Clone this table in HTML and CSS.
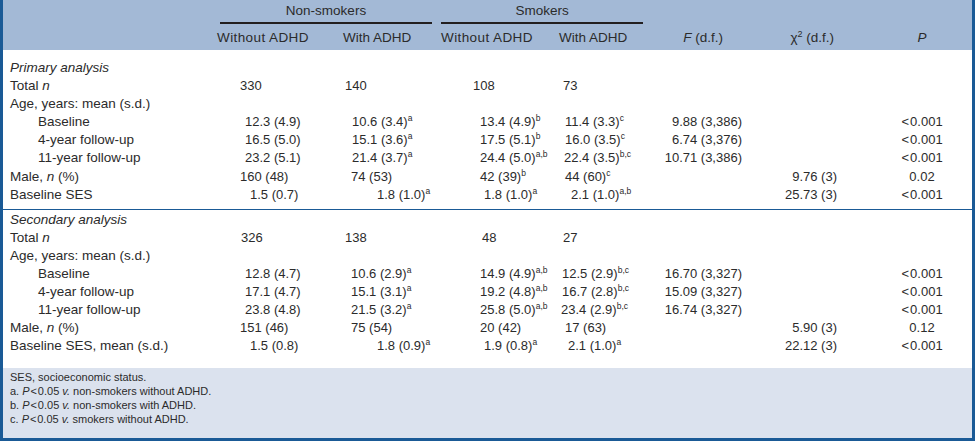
FILE: index.html
```html
<!DOCTYPE html>
<html>
<head>
<meta charset="utf-8">
<link rel="stylesheet" href="styles.css">
</head>
<body>
<div class="frame">
  <table class="t">
    <colgroup>
      <col class="w0"><col class="w1"><col class="w2"><col class="w3"><col class="w4"><col class="wf"><col class="wx"><col class="wp">
    </colgroup>
    <thead class="head">
      <tr class="hr1">
        <th></th>
        <th colspan="2" class="grp grp-non"><span class="grp-line">Non-smokers</span></th>
        <th colspan="2" class="grp grp-smk"><span class="grp-line">Smokers</span></th>
        <th></th><th></th><th></th>
      </tr>
      <tr class="hr2">
        <th></th>
        <th class="h1">Without ADHD</th>
        <th class="h2">With ADHD</th>
        <th class="h3">Without ADHD</th>
        <th class="h4">With ADHD</th>
        <th class="hf"><i>F</i> (d.f.)</th>
        <th class="hx">χ<sup class="sq">2</sup> (d.f.)</th>
        <th class="hp"><i>P</i></th>
      </tr>
    </thead>
    <tbody class="sec sec1">
      <tr><td class="lab"><i>Primary analysis</i></td><td></td><td></td><td></td><td></td><td></td><td></td><td></td></tr>
      <tr><td class="lab">Total <i>n</i></td><td class="p28">330</td><td class="p10">140</td><td class="p37">108</td><td class="p10">73</td><td></td><td></td><td></td></tr>
      <tr><td class="lab">Age, years: mean (s.d.)</td><td></td><td></td><td></td><td></td><td></td><td></td><td></td></tr>
      <tr><td class="sub">Baseline</td><td class="p33">12.3 (4.9)</td><td class="p17">10.6 (3.4)<sup>a</sup></td><td class="p44">13.4 (4.9)<sup>b</sup></td><td class="p12">11.4 (3.3)<sup>c</sup></td><td class="f">9.88 (3,386)</td><td class="x"></td><td class="pv">&lt;&#8202;0.001</td></tr>
      <tr><td class="sub">4-year follow-up</td><td class="p33">16.5 (5.0)</td><td class="p17">15.1 (3.6)<sup>a</sup></td><td class="p44">17.5 (5.1)<sup>b</sup></td><td class="p12">16.0 (3.5)<sup>c</sup></td><td class="f">6.74 (3,376)</td><td class="x"></td><td class="pv">&lt;&#8202;0.001</td></tr>
      <tr><td class="sub">11-year follow-up</td><td class="p33">23.2 (5.1)</td><td class="p17">21.4 (3.7)<sup>a</sup></td><td class="p44">24.4 (5.0)<sup>a,b</sup></td><td class="p11">22.4 (3.5)<sup>b,c</sup></td><td class="f">10.71 (3,386)</td><td class="x"></td><td class="pv">&lt;&#8202;0.001</td></tr>
      <tr><td class="lab">Male, <i>n</i> (%)</td><td class="p28">160 (48)</td><td class="p16">74 (53)</td><td class="p44">42 (39)<sup>b</sup></td><td class="p12">44 (60)<sup>c</sup></td><td class="f"></td><td class="x">9.76 (3)</td><td class="pv">0.02</td></tr>
      <tr><td class="lab">Baseline SES</td><td class="p38">1.5 (0.7)</td><td class="p42">1.8 (1.0)<sup>a</sup></td><td class="p48">1.8 (1.0)<sup>a</sup></td><td class="p18">2.1 (1.0)<sup>a,b</sup></td><td class="f"></td><td class="x">25.73 (3)</td><td class="pv">&lt;&#8202;0.001</td></tr>
    </tbody>
    <tbody class="sec sec2">
      <tr><td class="lab"><i>Secondary analysis</i></td><td></td><td></td><td></td><td></td><td></td><td></td><td></td></tr>
      <tr><td class="lab">Total <i>n</i></td><td class="p29">326</td><td class="p10">138</td><td class="p46">48</td><td class="p10">27</td><td></td><td></td><td></td></tr>
      <tr><td class="lab">Age, years: mean (s.d.)</td><td></td><td></td><td></td><td></td><td></td><td></td><td></td></tr>
      <tr><td class="sub">Baseline</td><td class="p33">12.8 (4.7)</td><td class="p16">10.6 (2.9)<sup>a</sup></td><td class="p44">14.9 (4.9)<sup>a,b</sup></td><td class="p9">12.5 (2.9)<sup>b,c</sup></td><td class="f">16.70 (3,327)</td><td class="x"></td><td class="pv">&lt;&#8202;0.001</td></tr>
      <tr><td class="sub">4-year follow-up</td><td class="p33">17.1 (4.7)</td><td class="p16">15.1 (3.1)<sup>a</sup></td><td class="p44">19.2 (4.8)<sup>a,b</sup></td><td class="p9">16.7 (2.8)<sup>b,c</sup></td><td class="f">15.09 (3,327)</td><td class="x"></td><td class="pv">&lt;&#8202;0.001</td></tr>
      <tr><td class="sub">11-year follow-up</td><td class="p33">23.8 (4.8)</td><td class="p16">21.5 (3.2)<sup>a</sup></td><td class="p44">25.8 (5.0)<sup>a,b</sup></td><td class="p8">23.4 (2.9)<sup>b,c</sup></td><td class="f">16.74 (3,327)</td><td class="x"></td><td class="pv">&lt;&#8202;0.001</td></tr>
      <tr><td class="lab">Male, <i>n</i> (%)</td><td class="p28">151 (46)</td><td class="p16">75 (54)</td><td class="p44">20 (42)</td><td class="p12">17 (63)</td><td class="f"></td><td class="x">5.90 (3)</td><td class="pv">0.12</td></tr>
      <tr><td class="lab">Baseline SES, mean (s.d.)</td><td class="p38">1.5 (0.8)</td><td class="p42">1.8 (0.9)<sup>a</sup></td><td class="p48">1.9 (0.8)<sup>a</sup></td><td class="p15">2.1 (1.0)<sup>a</sup></td><td class="f"></td><td class="x">22.12 (3)</td><td class="pv">&lt;&#8202;0.001</td></tr>
    </tbody>
  </table>
  <div class="notes">
    <div>SES, socioeconomic status.</div>
    <div>a. <i>P</i>&#8202;&lt;&#8202;0.05 <i>v.</i> non-smokers without ADHD.</div>
    <div>b. <i>P</i>&#8202;&lt;&#8202;0.05 <i>v.</i> non-smokers with ADHD.</div>
    <div>c. <i>P</i>&#8202;&lt;&#8202;0.05 <i>v.</i> smokers without ADHD.</div>
  </div>
</div>
</body>
</html>
```
FILE: styles.css
```css
html, body { margin: 0; padding: 0; background: #ffffff; }
body {
  font-family: "Liberation Sans", Arial, sans-serif;
  font-size: 13.5px;
  color: #2b2b2b;
}
.frame {
  width: 975px;
  height: 441px;
  box-sizing: border-box;
  border-left: 3px solid #1a5a96;
  border-right: 3px solid #1a5a96;
  border-bottom: 3px solid #1a5a96;
  display: flex;
  flex-direction: column;
  background: #ffffff;
}
.t {
  width: 969px;
  border-collapse: collapse;
  table-layout: fixed;
  border-spacing: 0;
}
.w0 { width: 209px; }
.w1 { width: 123px; }
.w2 { width: 101px; }
.w3 { width: 117px; }
.w4 { width: 97px; }
.wf { width: 100px; }
.wx { width: 110px; }
.wp { width: 112px; }

.t th, .t td {
  padding: 0;
  font-weight: normal;
  white-space: nowrap;
  text-align: left;
  line-height: 18.1px;
  vertical-align: top;
}
.t td { font-size: 13px; }
.t td.lab, .t td.sub { font-size: 13.5px; }
.head { background: #a3b9d6; }
.hr1 th { padding-top: 2px; line-height: 18px; }
.grp { text-align: center; }
.grp-line {
  display: block;
  text-align: center;
  padding-bottom: 2px;
  border-bottom: 2px solid #231f20;
}
.grp-non { padding-left: 8px !important; padding-right: 4px !important; }
.grp-smk { padding-left: 5px !important; padding-right: 7px !important; }
.hr2 th { padding-top: 5px; padding-bottom: 3px; line-height: 18px; }
.hr2 .h1, .hr2 .h3 { letter-spacing: 0.4px; }
.hr2 .h1 { padding-left: 5px; }
.hr2 .h2 { padding-left: 8px; }
.hr2 .h3 { padding-left: 5px; }
.hr2 .h4 { padding-left: 6px; }
.hr2 .hf { text-align: right; padding-right: 27px; }
.hr2 .hx { text-align: right; padding-right: 26px; }
.hr2 .hp { text-align: center; padding-left: 12px; }

.sq { font-size: 9px; vertical-align: 5px; line-height: 0; }
sup { font-size: 8.5px; vertical-align: 5px; line-height: 0; }

.lab { padding-left: 7px !important; }
.sub { padding-left: 35px !important; }
.f { text-align: right !important; padding-right: 8px !important; }
.x { text-align: right !important; padding-right: 23px !important; }
.pv { text-align: center !important; padding-left: 12px !important; }

.p8 { padding-left: 8px !important; }
.p9 { padding-left: 9px !important; }
.p10 { padding-left: 10px !important; }
.p11 { padding-left: 11px !important; }
.p12 { padding-left: 12px !important; }
.p15 { padding-left: 15px !important; }
.p16 { padding-left: 16px !important; }
.p17 { padding-left: 17px !important; }
.p18 { padding-left: 18px !important; }
.p28 { padding-left: 28px !important; }
.p29 { padding-left: 29px !important; }
.p33 { padding-left: 33px !important; }
.p37 { padding-left: 37px !important; }
.p38 { padding-left: 38px !important; }
.p42 { padding-left: 42px !important; }
.p44 { padding-left: 44px !important; }
.p46 { padding-left: 46px !important; }
.p48 { padding-left: 48px !important; }

.sec1 tr:first-child td { padding-top: 9px; }
.sec1 tr:last-child td { padding-bottom: 5px; }
.sec2 tr:first-child td { padding-top: 1px; border-top: 1px solid #1a5a96; }
.sec2 tr:last-child td { padding-bottom: 12px; }

.notes {
  flex: 1;
  background: #dbe2ee;
  padding: 2px 0 0 7px;
  font-size: 11px;
  line-height: 14.3px;
}
```
